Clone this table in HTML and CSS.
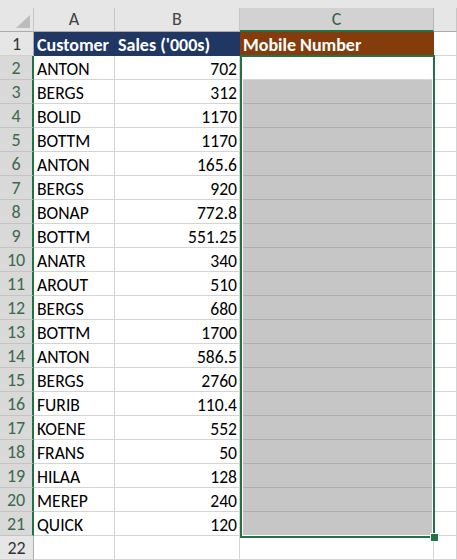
FILE: index.html
```html
<!DOCTYPE html>
<html>
<head>
<meta charset="utf-8">
<link rel="stylesheet" href="styles.css">
</head>
<body>
<div class="sheet">
  <div class="strip"></div>
  <div class="grid">
    <div class="corner"><svg width="34" height="24" viewBox="0 0 34 24"><polygon points="30,7 30,20 16,20" fill="#bcbcbc"/></svg></div>
    <div class="ch">A</div>
    <div class="ch">B</div>
    <div class="ch ch-sel">C</div>
    <div class="ch ch-last"></div>

    <div class="rh">1</div>
    <div class="cell navy bold">Customer</div>
    <div class="cell navy bold">Sales ('000s)</div>
    <div class="cell brown bold">Mobile Number</div>
    <div class="cell"></div>

    <div class="rh sel">2</div><div class="cell">ANTON</div><div class="cell num">702</div><div class="cell active"></div><div class="cell"></div>
    <div class="rh sel">3</div><div class="cell">BERGS</div><div class="cell num">312</div><div class="cell shade"></div><div class="cell"></div>
    <div class="rh sel">4</div><div class="cell">BOLID</div><div class="cell num">1170</div><div class="cell shade"></div><div class="cell"></div>
    <div class="rh sel">5</div><div class="cell">BOTTM</div><div class="cell num">1170</div><div class="cell shade"></div><div class="cell"></div>
    <div class="rh sel">6</div><div class="cell">ANTON</div><div class="cell num">165.6</div><div class="cell shade"></div><div class="cell"></div>
    <div class="rh sel">7</div><div class="cell">BERGS</div><div class="cell num">920</div><div class="cell shade"></div><div class="cell"></div>
    <div class="rh sel">8</div><div class="cell">BONAP</div><div class="cell num">772.8</div><div class="cell shade"></div><div class="cell"></div>
    <div class="rh sel">9</div><div class="cell">BOTTM</div><div class="cell num">551.25</div><div class="cell shade"></div><div class="cell"></div>
    <div class="rh sel">10</div><div class="cell">ANATR</div><div class="cell num">340</div><div class="cell shade"></div><div class="cell"></div>
    <div class="rh sel">11</div><div class="cell">AROUT</div><div class="cell num">510</div><div class="cell shade"></div><div class="cell"></div>
    <div class="rh sel">12</div><div class="cell">BERGS</div><div class="cell num">680</div><div class="cell shade"></div><div class="cell"></div>
    <div class="rh sel">13</div><div class="cell">BOTTM</div><div class="cell num">1700</div><div class="cell shade"></div><div class="cell"></div>
    <div class="rh sel">14</div><div class="cell">ANTON</div><div class="cell num">586.5</div><div class="cell shade"></div><div class="cell"></div>
    <div class="rh sel">15</div><div class="cell">BERGS</div><div class="cell num">2760</div><div class="cell shade"></div><div class="cell"></div>
    <div class="rh sel">16</div><div class="cell">FURIB</div><div class="cell num">110.4</div><div class="cell shade"></div><div class="cell"></div>
    <div class="rh sel">17</div><div class="cell">KOENE</div><div class="cell num">552</div><div class="cell shade"></div><div class="cell"></div>
    <div class="rh sel">18</div><div class="cell">FRANS</div><div class="cell num">50</div><div class="cell shade"></div><div class="cell"></div>
    <div class="rh sel">19</div><div class="cell">HILAA</div><div class="cell num">128</div><div class="cell shade"></div><div class="cell"></div>
    <div class="rh sel">20</div><div class="cell">MEREP</div><div class="cell num">240</div><div class="cell shade"></div><div class="cell"></div>
    <div class="rh sel">21</div><div class="cell">QUICK</div><div class="cell num">120</div><div class="cell shade"></div><div class="cell"></div>
    <div class="rh">22</div><div class="cell"></div><div class="cell"></div><div class="cell"></div><div class="cell"></div>
  </div>
  <div class="selection"><span class="handle"></span></div>
</div>
</body>
</html>
```

FILE: styles.css
```css
* { box-sizing: border-box; }
html, body { margin: 0; padding: 0; background: #ffffff; }
body {
  width: 457px;
  height: 560px;
  overflow: hidden;
  font-family: Calibri, Carlito, Lato, "Open Sans", sans-serif;
}
.sheet {
  position: relative;
  width: 457px;
  height: 560px;
  overflow: hidden;
}
.strip {
  height: 8px;
  background: #e6e6e6;
}
.grid {
  display: grid;
  grid-template-columns: 34px 81px 125px 194px 23px;
  grid-auto-rows: 24px;
}
.corner {
  background: #e6e6e6;
  border-right: 1px solid #c6c6c6;
  border-bottom: 1px solid #ababab;
  line-height: 0;
}
.corner svg { display: block; }
.ch {
  background: #e6e6e6;
  border-right: 1px solid #c6c6c6;
  border-bottom: 1px solid #ababab;
  color: #444444;
  font-size: 18px;
  line-height: 23px;
  text-align: center;
}
.ch-sel {
  background: #d2d2d2;
  color: #2f6140;
  border-right-color: #b4b4b4;
  border-bottom: 2px solid #217346;
}
.rh {
  background: #e6e6e6;
  border-right: 1px solid #ababab;
  border-bottom: 1px solid #d0d0d0;
  color: #333333;
  font-size: 18px;
  line-height: 22px;
  padding-top: 1px;
  text-align: center;
}
.rh.sel {
  background: #d9d9d9;
  color: #3a6a4a;
  border-right: 2px solid #217346;
  border-bottom-color: #c4c4c4;
}
.cell {
  border-right: 1px solid #d4d4d4;
  border-bottom: 1px solid #d4d4d4;
  font-size: 17.6px;
  line-height: 22px;
  padding: 2px 3px 0 3px;
  color: #000000;
  white-space: nowrap;
  overflow: hidden;
}
.num { text-align: right; padding-right: 2px; }
.bold { font-weight: 700; color: #ffffff; font-size: 18px; }
.navy { background: #203764; border-color: #203764; }
.brown { background: #843c0c; border-color: #843c0c; }
.shade { background: #c6c6c6; border-bottom-color: #adadad; }
.active { background: #ffffff; }
.selection {
  position: absolute;
  left: 240px;
  top: 55px;
  width: 195px;
  height: 483px;
  border: 2px solid #217346;
  box-shadow: inset 0 0 0 1px #ffffff;
}
.handle {
  position: absolute;
  right: -5px;
  bottom: -5px;
  width: 7px;
  height: 7px;
  background: #217346;
  outline: 1px solid #ffffff;
}
```
